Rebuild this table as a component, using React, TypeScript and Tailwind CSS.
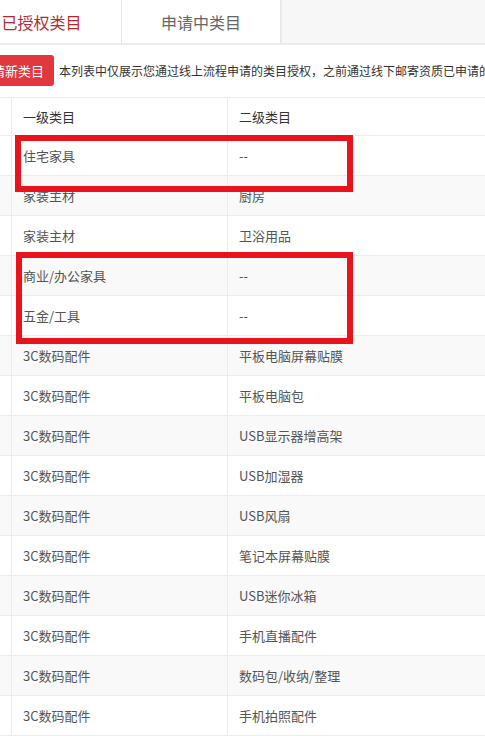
import React from "react"

const rows: [string, string][] = [
  ["住宅家具", "--"],
  ["家装主材", "厨房"],
  ["家装主材", "卫浴用品"],
  ["商业/办公家具", "--"],
  ["五金/工具", "--"],
  ["3C数码配件", "平板电脑屏幕贴膜"],
  ["3C数码配件", "平板电脑包"],
  ["3C数码配件", "USB显示器增高架"],
  ["3C数码配件", "USB加湿器"],
  ["3C数码配件", "USB风扇"],
  ["3C数码配件", "笔记本屏幕贴膜"],
  ["3C数码配件", "USB迷你冰箱"],
  ["3C数码配件", "手机直播配件"],
  ["3C数码配件", "数码包/收纳/整理"],
  ["3C数码配件", "手机拍照配件"],
]

export default function App() {
  return (
    <div
      className="relative w-[485px] h-[736px] overflow-hidden bg-white"
      style={{ fontFamily: '"Microsoft YaHei", "Noto Sans CJK SC", "Noto Sans", sans-serif' }}
    >
      {/* tabs */}
      <div className="flex h-[45px] bg-[#f7f7f7] border-b-2 border-[#ebebeb] -ml-[38px] w-[600px]">
        <div className="w-[160px] bg-white border-r border-[#e6e6e6] flex items-center justify-center text-[16px] text-[#b8282e]">
          已授权类目
        </div>
        <div className="w-[160px] bg-white border-r-2 border-[#e9e9e9] flex items-center justify-center text-[16px] text-[#666]">
          申请中类目
        </div>
      </div>

      {/* notice */}
      <div className="flex items-center mt-[10px] -ml-[31px] w-[700px] whitespace-nowrap">
        <button className="h-[31px] px-[10px] rounded-[3px] bg-[#e0383e] text-white text-[13px] leading-none">
          申请新类目
        </button>
        <span className="ml-[5px] text-[12px] text-[#333]">
          本列表中仅展示您通过线上流程申请的类目授权，之前通过线下邮寄资质已申请的类目请联系小二查询
        </span>
      </div>

      {/* table */}
      <div className="mt-[11px] -ml-[38px] w-[700px] border-t border-[#ececec] text-[13px] text-[#555]">
        <div className="grid grid-cols-[50px_216px_1fr] h-[38px] border-b border-[#ececec] text-[#333]">
          <div className="border-r border-[#ececec]" />
          <div className="border-r border-[#ececec] flex items-center pl-[11px]">一级类目</div>
          <div className="flex items-center pl-[11px]">二级类目</div>
        </div>
        {rows.map(([a, b], i) => (
          <div
            key={i}
            className={`grid grid-cols-[50px_216px_1fr] h-[40px] border-b border-[#ececec] ${
              i % 2 === 1 ? "bg-[#f9f9f9]" : "bg-white"
            }`}
          >
            <div className="border-r border-[#ececec]" />
            <div className="border-r border-[#ececec] flex items-center pl-[11px]">{a}</div>
            <div className="flex items-center pl-[11px]">{b}</div>
          </div>
        ))}
      </div>

      {/* annotation boxes */}
      <div className="absolute left-[15px] top-[135px] w-[338px] h-[57px] border-[6px] border-[#e8131b]" />
      <div className="absolute left-[16px] top-[252px] w-[337px] h-[92px] border-[6px] border-[#e8131b]" />
    </div>
  )
}
